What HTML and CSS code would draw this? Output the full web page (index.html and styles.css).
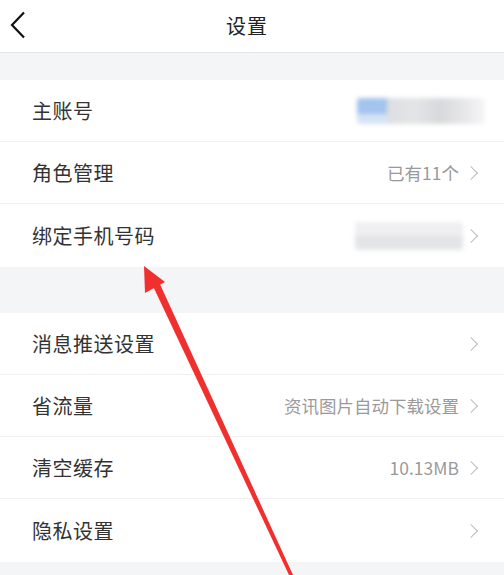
FILE: index.html
```html
<!DOCTYPE html>
<html lang="zh-CN">
<head>
<meta charset="utf-8">
<title>设置</title>
<link rel="stylesheet" href="styles.css">
</head>
<body>
<div class="page">
  <header class="nav">
    <span class="back">
      <svg width="18" height="28" viewBox="0 0 18 28"><path d="M15 1.5 L3 14 L15 26.5" fill="none" stroke="#111" stroke-width="2.2" stroke-linejoin="miter"/></svg>
    </span>
    <h1 class="title">设置</h1>
  </header>
  <div class="gap gap-top"></div>
  <section class="group">
    <div class="row">
      <span class="label">主账号</span>
      <span class="blur blur-account"></span>
    </div>
    <div class="row">
      <span class="label">角色管理</span>
      <span class="value">已有11个</span>
      <span class="chev"></span>
    </div>
    <div class="row">
      <span class="label">绑定手机号码</span>
      <span class="blur blur-phone"></span>
      <span class="chev"></span>
    </div>
  </section>
  <div class="gap gap-mid"></div>
  <section class="group">
    <div class="row">
      <span class="label">消息推送设置</span>
      <span class="chev"></span>
    </div>
    <div class="row">
      <span class="label">省流量</span>
      <span class="value">资讯图片自动下载设置</span>
      <span class="chev"></span>
    </div>
    <div class="row">
      <span class="label">清空缓存</span>
      <span class="value">10.13MB</span>
      <span class="chev"></span>
    </div>
    <div class="row">
      <span class="label">隐私设置</span>
      <span class="chev"></span>
    </div>
  </section>
  <svg class="arrow" width="504" height="575" viewBox="0 0 504 575">
    <polygon points="152,284 159,282 293,575 289,575" fill="#f0302f"/>
    <polygon points="144,266 165,282 145,293" fill="#f0302f"/>
  </svg>
</div>
</body>
</html>
```
FILE: styles.css
```css
html, body {
  margin: 0;
  padding: 0;
}
body {
  background: #f4f5f7;
  font-family: "Noto Sans CJK SC", "Noto Sans", sans-serif;
  overflow: hidden;
}
.page {
  position: relative;
  width: 504px;
  height: 575px;
  overflow: hidden;
}
.nav {
  height: 52px;
  background: #fff;
  border-bottom: 1px solid #e4e5e8;
  display: flex;
  align-items: center;
  justify-content: center;
  padding-right: 10px;
  position: relative;
}
.back {
  position: absolute;
  left: 9px;
  top: 11px;
  width: 18px;
  height: 28px;
  display: flex;
}
.title {
  margin: 0;
  font-size: 20px;
  font-weight: 400;
  color: #222;
  line-height: 1;
  letter-spacing: 1px;
}
.gap-top { height: 27px; }
.gap-mid { height: 46px; }
.group {
  background: #fff;
}
.row {
  height: 61px;
  display: flex;
  align-items: center;
  padding: 0 26px 0 32px;
  border-bottom: 1px solid #f0f0f2;
}
.row:last-child {
  border-bottom: none;
  height: 63px;
}
.label {
  flex: 1;
  font-size: 20px;
  color: #333;
  letter-spacing: 0.5px;
}
.value {
  font-size: 17.5px;
  color: #9a9a9a;
  margin-right: 7px;
}
.chev {
  width: 9px;
  height: 9px;
  border-top: 1.5px solid #bcbcbc;
  border-right: 1.5px solid #bcbcbc;
  transform: rotate(45deg);
  margin-right: 2px;
}
.blur {
  display: block;
  filter: blur(2px);
  border-radius: 3px;
}
.blur-account {
  width: 128px;
  height: 26px;
  margin-right: -7px;
  background:
    linear-gradient(to bottom, #a3c4ee 0, #a3c4ee 62%, #d6e3f5 62%, #d6e3f5 100%) 0 0 / 30px 100% no-repeat,
    linear-gradient(to right, #f0f0f2 0, #dcdde0 20%, #e4e5e7 45%, #d8d9dc 65%, #e8e8ea 85%, #f6f6f7 100%);
}
.blur-phone {
  width: 108px;
  height: 28px;
  margin-right: 3px;
  background:
    linear-gradient(to bottom, #efeff1 0, #efeff1 50%, #e2e3e5 50%, #e5e6e8 100%);
}
.arrow {
  position: absolute;
  left: 0;
  top: 0;
  pointer-events: none;
}
```
